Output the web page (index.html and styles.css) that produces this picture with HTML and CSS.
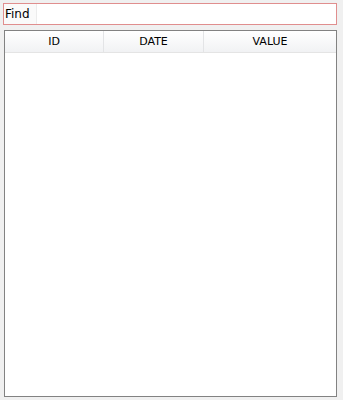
FILE: index.html
```html
<!DOCTYPE html>
<html>
<head>
<meta charset="UTF-8">
<title>Find</title>
<link rel="stylesheet" href="styles.css">
</head>
<body>
  <div class="finder">
    <span class="finder-label">Find</span>
    <input class="finder-input" type="text">
  </div>
  <div class="grid">
    <div class="grid-head">
      <div class="col col-id">ID</div>
      <div class="col col-date">DATE</div>
      <div class="col col-value">VALUE</div>
    </div>
    <div class="grid-body"></div>
  </div>
</body>
</html>
```

FILE: styles.css
```css
html, body {
  margin: 0;
  background: #f0f0f0;
  font-family: "DejaVu Sans", sans-serif;
  font-size: 11px;
  color: #000;
}
body {
  padding: 3px 0 0 3px;
  width: 334px;
}
.finder {
  display: flex;
  height: 20px;
  border: 1px solid #e08e8e;
  background: #fff;
}
.finder-label {
  display: flex;
  align-items: center;
  padding: 0 6px 0 1px;
  font-size: 12px;
  border-right: 1px solid #ececec;
  background: #fafafa;
}
.finder-input {
  flex: 1;
  border: 0;
  outline: 0;
  margin: 0;
  padding: 0 3px;
  background: #fff;
}
.grid {
  margin: 5px 0 0 1px;
  width: 331px;
  height: 365px;
  border: 1px solid #828282;
  background: #fff;
  display: flex;
  flex-direction: column;
}
.grid-head {
  display: flex;
  height: 21px;
  border-bottom: 1px solid #e4e4e4;
  background: linear-gradient(#ffffff, #f1f2f4);
}
.col {
  display: flex;
  align-items: center;
  justify-content: center;
  border-right: 1px solid #e3e4e6;
}
.col-id {
  width: 98px;
}
.col-date {
  width: 99px;
}
.col-value {
  flex: 1;
  border-right: 0;
}
.grid-body {
  flex: 1;
}
```
